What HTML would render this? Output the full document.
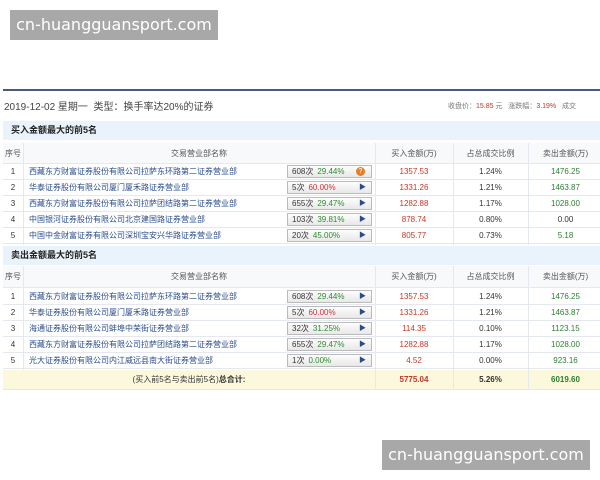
<!DOCTYPE html>
<html><head><meta charset="utf-8"><style>
*{margin:0;padding:0;box-sizing:border-box}
body{width:600px;height:480px;background:#fff;position:relative;overflow:hidden;font-family:"Liberation Sans","Noto Sans CJK SC",sans-serif;font-size:8px;color:#333}
.wm{position:absolute;background:#a8a8a8;color:#fff;font-size:16px;line-height:30px;text-align:center;font-family:"DejaVu Sans","Liberation Sans",sans-serif}
.ab{position:absolute}
.sec{position:absolute;left:3px;width:597px;background:#eaf3fb;font-weight:bold;font-size:9px;color:#222;padding-left:8px;line-height:19px}
.row{position:absolute;left:3px;width:597px;height:16px;border-bottom:1px solid #e4e9ef;line-height:16px}
.row div{position:absolute;top:0;text-align:center}
.c0{left:0;width:20px}
.c1{left:26px;text-align:left!important;color:#2b4c8c}
.c3{left:372px;width:78px;color:#c0392b}
.c4{left:450px;width:75px}
.c5{left:525px;width:75px;color:#2e7d32}
.hd{color:#555;background:#f7f9fb}
.box{left:284px;width:85px;height:13px;top:1px!important;border:1px solid #bbb;background:linear-gradient(#fdfdfd,#e8e8e8);line-height:11px;text-align:left!important;padding-left:4px;color:#333}
.box .p{position:static;display:inline-block;margin-left:4px;color:#2e8b2e}
.box .r{color:#d0303a}
.box .a{position:absolute;left:71px;top:0;color:#2b4c8c;font-size:7px}
.q{position:absolute;left:68px!important;top:1px!important;width:9px;height:9px;border-radius:50%;background:#e67e22;color:#fff;font-size:7px;line-height:9px;text-align:center!important}
.vl{position:absolute;width:1px;background:#e4e9ef}
</style></head><body>
<div class="wm" style="left:10px;top:10px;width:208px">cn-huangguansport.com</div>
<div class="wm" style="left:382px;top:440px;width:208px">cn-huangguansport.com</div>
<div class="ab" style="left:3px;top:89px;width:597px;height:2px;background:#4a5a78"></div>
<div class="ab" style="left:4px;top:98px;font-size:10px;color:#444">2019-12-02 星期一&nbsp; 类型：换手率达20%的证券</div>
<div class="ab" style="left:448px;top:101px;font-size:7px;color:#777">收盘价：<span style="color:#c0392b">15.85</span> 元&nbsp;&nbsp; 涨跌幅：<span style="color:#c0392b">3.19%</span>&nbsp;&nbsp; 成交</div>

<div class="sec" style="top:121px">买入金额最大的前5名</div>
<div class="row hd" style="top:143px;height:21px;line-height:21px"><div class="c0">序号</div><div style="left:20px;width:352px">交易营业部名称</div><div class="c3" style="color:#555">买入金额(万)</div><div class="c4">占总成交比例</div><div class="c5" style="color:#555">卖出金额(万)</div></div>
<div class="row" style="top:164px"><div class="c0">1</div><div class="c1">西藏东方财富证券股份有限公司拉萨东环路第二证券营业部</div><div class="box">608次<span class="p">29.44%</span><span class="q">?</span></div><div class="c3">1357.53</div><div class="c4">1.24%</div><div class="c5">1476.25</div></div>
<div class="row" style="top:180px"><div class="c0">2</div><div class="c1">华泰证券股份有限公司厦门厦禾路证券营业部</div><div class="box">5次<span class="p r">60.00%</span><span class="a">▶</span></div><div class="c3">1331.26</div><div class="c4">1.21%</div><div class="c5">1463.87</div></div>
<div class="row" style="top:196px"><div class="c0">3</div><div class="c1">西藏东方财富证券股份有限公司拉萨团结路第二证券营业部</div><div class="box">655次<span class="p">29.47%</span><span class="a">▶</span></div><div class="c3">1282.88</div><div class="c4">1.17%</div><div class="c5">1028.00</div></div>
<div class="row" style="top:212px"><div class="c0">4</div><div class="c1">中国银河证券股份有限公司北京建国路证券营业部</div><div class="box">103次<span class="p">39.81%</span><span class="a">▶</span></div><div class="c3">878.74</div><div class="c4">0.80%</div><div class="c5" style="color:#333">0.00</div></div>
<div class="row" style="top:228px"><div class="c0">5</div><div class="c1">中国中金财富证券有限公司深圳宝安兴华路证券营业部</div><div class="box">20次<span class="p">45.00%</span><span class="a">▶</span></div><div class="c3">805.77</div><div class="c4">0.73%</div><div class="c5">5.18</div></div>

<div class="sec" style="top:246px">卖出金额最大的前5名</div>
<div class="row hd" style="top:266px;height:22px;line-height:22px"><div class="c0">序号</div><div style="left:20px;width:352px">交易营业部名称</div><div class="c3" style="color:#555">买入金额(万)</div><div class="c4">占总成交比例</div><div class="c5" style="color:#555">卖出金额(万)</div></div>
<div class="row" style="top:289px"><div class="c0">1</div><div class="c1">西藏东方财富证券股份有限公司拉萨东环路第二证券营业部</div><div class="box">608次<span class="p">29.44%</span><span class="a">▶</span></div><div class="c3">1357.53</div><div class="c4">1.24%</div><div class="c5">1476.25</div></div>
<div class="row" style="top:305px"><div class="c0">2</div><div class="c1">华泰证券股份有限公司厦门厦禾路证券营业部</div><div class="box">5次<span class="p r">60.00%</span><span class="a">▶</span></div><div class="c3">1331.26</div><div class="c4">1.21%</div><div class="c5">1463.87</div></div>
<div class="row" style="top:321px"><div class="c0">3</div><div class="c1">海通证券股份有限公司蚌埠中荣街证券营业部</div><div class="box">32次<span class="p">31.25%</span><span class="a">▶</span></div><div class="c3">114.35</div><div class="c4">0.10%</div><div class="c5">1123.15</div></div>
<div class="row" style="top:337px"><div class="c0">4</div><div class="c1">西藏东方财富证券股份有限公司拉萨团结路第二证券营业部</div><div class="box">655次<span class="p">29.47%</span><span class="a">▶</span></div><div class="c3">1282.88</div><div class="c4">1.17%</div><div class="c5">1028.00</div></div>
<div class="row" style="top:353px"><div class="c0">5</div><div class="c1">光大证券股份有限公司内江威远县南大街证券营业部</div><div class="box">1次<span class="p">0.00%</span><span class="a">▶</span></div><div class="c3">4.52</div><div class="c4">0.00%</div><div class="c5">923.16</div></div>
<div class="row" style="top:370px;height:20px;line-height:20px;background:#fbf8dc;font-weight:bold"><div style="left:0;width:372px;font-weight:normal">(买入前5名与卖出前5名)<b>总合计:</b></div><div class="c3">5775.04</div><div class="c4">5.26%</div><div class="c5">6019.60</div></div>

<div class="vl" style="left:23px;top:143px;height:102px"></div>
<div class="vl" style="left:375px;top:143px;height:102px"></div>
<div class="vl" style="left:453px;top:143px;height:102px"></div>
<div class="vl" style="left:528px;top:143px;height:102px"></div>
<div class="vl" style="left:23px;top:266px;height:104px"></div>
<div class="vl" style="left:375px;top:266px;height:124px"></div>
<div class="vl" style="left:453px;top:266px;height:124px"></div>
<div class="vl" style="left:528px;top:266px;height:124px"></div>
</body></html>
